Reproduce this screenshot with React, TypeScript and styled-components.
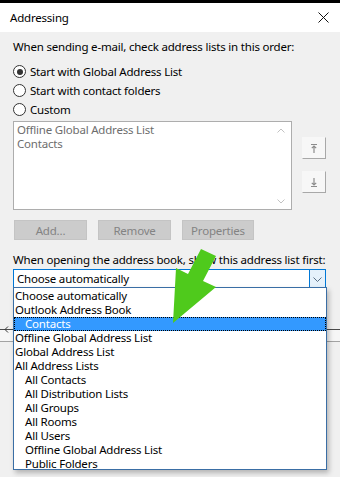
import React from "react"
import styled, { createGlobalStyle } from "styled-components"

const GlobalStyle = createGlobalStyle`
  html, body {
    margin: 0;
    padding: 0;
    background: #f0f0f0;
  }
  body {
    font-family: "Noto Sans", "Open Sans", sans-serif;
    font-size: 11.5px;
    letter-spacing: -0.2px;
    color: #000;
  }
`

const Screen = styled.div`
  position: relative;
  width: 340px;
  height: 477px;
  overflow: hidden;
  background: #f0f0f0;
`

const TopEdge = styled.div`
  height: 3px;
  background: #000;
`

const TitleBar = styled.div`
  height: 29px;
  background: #fff;
  display: flex;
  align-items: center;
  justify-content: space-between;
  padding: 0 11px 0 10px;
`

const Title = styled.span`
  line-height: 16px;
`

const Body = styled.div`
  padding: 7px 14px 0 13px;
`

const Label = styled.div<{ $top?: number }>`
  line-height: 16px;
  margin-top: ${(p) => p.$top ?? 0}px;
  white-space: nowrap;
`

const RadioGroup = styled.div`
  margin-top: 7px;
  display: flex;
  flex-direction: column;
`

const RadioRow = styled.label`
  height: 19px;
  display: flex;
  align-items: center;
  gap: 4px;
`

const RadioDot = styled.span<{ $checked?: boolean }>`
  width: 11px;
  height: 11px;
  border: 1px solid #333;
  border-radius: 50%;
  background: #fff;
  display: flex;
  align-items: center;
  justify-content: center;
  &::after {
    content: "";
    width: 6px;
    height: 6px;
    border-radius: 50%;
    background: ${(p) => (p.$checked ? "#333" : "transparent")};
  }
`

const ListArea = styled.div`
  margin-top: 2px;
  display: flex;
  gap: 10px;
`

const ListBox = styled.div`
  position: relative;
  width: 274px;
  height: 85px;
  border: 1px solid #adadad;
  background: #fff;
  padding: 1px 3px;
  box-sizing: content-box;
  color: #6d6d6d;
  line-height: 14px;
`

const ScrollArrow = styled.svg<{ $bottom?: boolean }>`
  position: absolute;
  right: 6px;
  ${(p) => (p.$bottom ? "bottom: 5px;" : "top: 6px;")}
`

const MoveButtons = styled.div`
  display: flex;
  flex-direction: column;
  gap: 12px;
  padding-top: 16px;
`

const MoveButton = styled.div`
  width: 22px;
  height: 20px;
  background: #f7f7f7;
  border-top: 1px solid #f7f7f7;
  border-left: 1px solid #f7f7f7;
  border-right: 1px solid #a8a8a8;
  border-bottom: 1px solid #a8a8a8;
  display: flex;
  align-items: center;
  justify-content: center;
`

const ButtonRow = styled.div`
  margin-top: 10px;
  margin-left: 1px;
  display: flex;
  gap: 11px;
`

const DisabledButton = styled.div<{ $w: number }>`
  width: ${(p) => p.$w}px;
  height: 20px;
  box-sizing: border-box;
  background: #cccccc;
  border: 1px solid #c4c4c4;
  color: #838383;
  display: flex;
  align-items: center;
  justify-content: center;
`

const Combo = styled.div`
  margin-top: 1px;
  width: 313px;
  height: 20px;
  box-sizing: border-box;
  border: 1px solid #0078d7;
  background: #fff;
  display: flex;
  align-items: stretch;
`

const ComboText = styled.div`
  flex: 1;
  padding-left: 3px;
  line-height: 18px;
`

const ComboButton = styled.div`
  width: 15px;
  background: #e5f1fb;
  border-left: 1px solid #0078d7;
  display: flex;
  align-items: center;
  justify-content: center;
`

const Backdrop = styled.div`
  margin: 40px -14px 0 -13px;
  height: 11px;
  border-top: 1px solid #4a4a4a;
  border-bottom: 1px solid #a3a3a3;
  background: #f6f6f6;
  display: flex;
  align-items: flex-start;
  padding-left: 4px;
`

const Dropdown = styled.div`
  position: absolute;
  left: 13px;
  top: 287px;
  width: 314px;
  height: 183px;
  box-sizing: border-box;
  background: #fff;
  border: 1px solid #3a6ea5;
  box-shadow: 2px 3px 5px rgba(0, 0, 0, 0.25);
  padding-top: 1px;
  z-index: 2;
`

const Option = styled.div<{ $indent?: boolean; $selected?: boolean }>`
  height: 14px;
  line-height: 14px;
  padding-left: ${(p) => (p.$indent ? 11 : 1)}px;
  white-space: nowrap;
  background: ${(p) => (p.$selected ? "#3399ff" : "transparent")};
  color: ${(p) => (p.$selected ? "#fff" : "#000")};
  outline: ${(p) => (p.$selected ? "1px dotted #000" : "none")};
  outline-offset: -1px;
`

const Pointer = styled.svg`
  position: absolute;
  left: 150px;
  top: 245px;
  z-index: 3;
`

const options: { text: string; indent?: boolean; selected?: boolean }[] = [
  { text: "Choose automatically" },
  { text: "Outlook Address Book" },
  { text: "Contacts", indent: true, selected: true },
  { text: "Offline Global Address List" },
  { text: "Global Address List" },
  { text: "All Address Lists" },
  { text: "All Contacts", indent: true },
  { text: "All Distribution Lists", indent: true },
  { text: "All Groups", indent: true },
  { text: "All Rooms", indent: true },
  { text: "All Users", indent: true },
  { text: "Offline Global Address List", indent: true },
  { text: "Public Folders", indent: true },
]

const UpIcon = () => (
  <svg width="8" height="11" viewBox="0 0 8 11">
    <path d="M1 1.5h6M4 10V3M1.8 5.2L4 3l2.2 2.2" stroke="#8c8c8c" strokeWidth="1.2" fill="none" />
  </svg>
)

const DownIcon = () => (
  <svg width="8" height="11" viewBox="0 0 8 11">
    <path d="M1 9.5h6M4 1v7M1.8 5.8L4 8l2.2-2.2" stroke="#8c8c8c" strokeWidth="1.2" fill="none" />
  </svg>
)

export default function App() {
  return (
    <Screen>
      <GlobalStyle />
      <TopEdge />
      <TitleBar>
        <Title>Addressing</Title>
        <svg width="11" height="11" viewBox="0 0 11 11">
          <path d="M0.5 0.5l10 10M10.5 0.5l-10 10" stroke="#111" strokeWidth="1" />
        </svg>
      </TitleBar>
      <Body>
        <Label>When sending e-mail, check address lists in this order:</Label>
        <RadioGroup>
          <RadioRow>
            <RadioDot $checked />
            Start with Global Address List
          </RadioRow>
          <RadioRow>
            <RadioDot />
            Start with contact folders
          </RadioRow>
          <RadioRow>
            <RadioDot />
            Custom
          </RadioRow>
        </RadioGroup>
        <ListArea>
          <ListBox>
            <div>Offline Global Address List</div>
            <div>Contacts</div>
            <ScrollArrow width="8" height="5" viewBox="0 0 8 5">
              <path d="M0.5 4.5L4 1l3.5 3.5" stroke="#c2c2c2" fill="none" />
            </ScrollArrow>
            <ScrollArrow $bottom width="8" height="5" viewBox="0 0 8 5">
              <path d="M0.5 0.5L4 4l3.5-3.5" stroke="#c2c2c2" fill="none" />
            </ScrollArrow>
          </ListBox>
          <MoveButtons>
            <MoveButton>
              <UpIcon />
            </MoveButton>
            <MoveButton>
              <DownIcon />
            </MoveButton>
          </MoveButtons>
        </ListArea>
        <ButtonRow>
          <DisabledButton $w={73}>Add...</DisabledButton>
          <DisabledButton $w={73}>Remove</DisabledButton>
          <DisabledButton $w={72}>Properties</DisabledButton>
        </ButtonRow>
        <Label $top={12}>When opening the address book, show this address list first:</Label>
        <Combo>
          <ComboText>Choose automatically</ComboText>
          <ComboButton>
            <svg width="9" height="5" viewBox="0 0 9 5">
              <path d="M0.5 0.5L4.5 4.5l4-4" stroke="#5a6f85" fill="none" />
            </svg>
          </ComboButton>
        </Combo>
        <Backdrop>
          <svg width="5" height="7" viewBox="0 0 5 7" style={{ marginTop: -4 }}>
            <path d="M4 0.5L1 3.5 4 6.5" stroke="#333" fill="none" />
          </svg>
        </Backdrop>
      </Body>
      <Dropdown>
        {options.map((o, i) => (
          <Option key={i} $indent={o.indent} $selected={o.selected}>
            {o.text}
          </Option>
        ))}
      </Dropdown>
      <Pointer width="75" height="85" viewBox="0 0 75 85">
        <polygon points="51,4 66,11 53,36 66,42 23,78 26,23 38,29" fill="#4fca1c" />
      </Pointer>
    </Screen>
  )
}
